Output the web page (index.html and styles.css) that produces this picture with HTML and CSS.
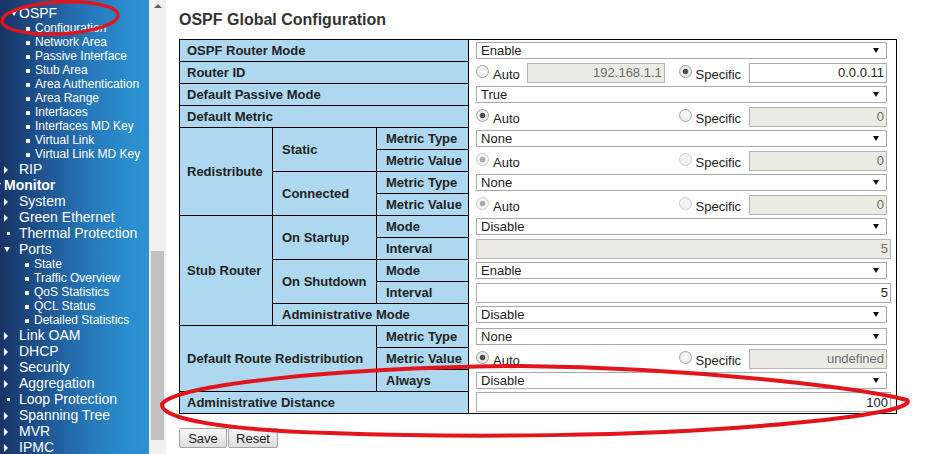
FILE: index.html
```html
<!DOCTYPE html>
<html>
<head>
<meta charset="utf-8">
<title>OSPF Global Configuration</title>
<link rel="stylesheet" href="styles.css">
</head>
<body>
<div class="page">
  <nav class="sidebar">
    <ul class="menu">
      <li class="top"><span class="mk mk-ospf"><span class="tri-d"></span></span>OSPF</li>
      <li class="sub"><span class="sq"></span>Configuration</li>
      <li class="sub"><span class="sq"></span>Network Area</li>
      <li class="sub"><span class="sq"></span>Passive Interface</li>
      <li class="sub"><span class="sq"></span>Stub Area</li>
      <li class="sub"><span class="sq"></span>Area Authentication</li>
      <li class="sub"><span class="sq"></span>Area Range</li>
      <li class="sub"><span class="sq"></span>Interfaces</li>
      <li class="sub"><span class="sq"></span>Interfaces MD Key</li>
      <li class="sub"><span class="sq"></span>Virtual Link</li>
      <li class="sub"><span class="sq"></span>Virtual Link MD Key</li>
      <li class="top"><span class="mk"><span class="tri-r"></span></span>RIP</li>
      <li class="group"><span class="mk-g"><span class="tri-d"></span></span>Monitor</li>
      <li class="top"><span class="mk"><span class="tri-r"></span></span>System</li>
      <li class="top"><span class="mk"><span class="tri-r"></span></span>Green Ethernet</li>
      <li class="top"><span class="mk"><span class="dot"></span></span>Thermal Protection</li>
      <li class="top"><span class="mk"><span class="tri-d"></span></span>Ports</li>
      <li class="sub sub2"><span class="sq"></span>State</li>
      <li class="sub sub2"><span class="sq"></span>Traffic Overview</li>
      <li class="sub sub2"><span class="sq"></span>QoS Statistics</li>
      <li class="sub sub2"><span class="sq"></span>QCL Status</li>
      <li class="sub sub2"><span class="sq"></span>Detailed Statistics</li>
      <li class="top"><span class="mk"><span class="tri-r"></span></span>Link OAM</li>
      <li class="top"><span class="mk"><span class="tri-r"></span></span>DHCP</li>
      <li class="top"><span class="mk"><span class="tri-r"></span></span>Security</li>
      <li class="top"><span class="mk"><span class="tri-r"></span></span>Aggregation</li>
      <li class="top"><span class="mk"><span class="dot"></span></span>Loop Protection</li>
      <li class="top"><span class="mk"><span class="tri-r"></span></span>Spanning Tree</li>
      <li class="top"><span class="mk"><span class="tri-r"></span></span>MVR</li>
      <li class="top"><span class="mk"><span class="tri-r"></span></span>IPMC</li>
    </ul>
  </nav>
  <div class="vscroll">
    <span class="up"></span>
    <span class="thumb"></span>
  </div>
  <main class="main">
    <h1 class="title">OSPF Global Configuration</h1>
    <table class="cfg">
      <colgroup>
        <col class="c1"><col class="c2"><col class="c3"><col class="c4">
      </colgroup>
      <tr>
        <th colspan="3" class="first">OSPF Router Mode</th>
        <td><span class="sel"><select><option>Enable</option></select></span></td>
      </tr>
      <tr>
        <th colspan="3" class="first">Router ID</th>
        <td>
          <div class="dual">
            <span class="opt"><input type="radio" class="rad" name="rid"><span class="lbl">Auto</span><input type="text" class="txt" value="192.168.1.1" disabled></span>
            <span class="opt"><input type="radio" class="rad" name="rid" checked><span class="lbl">Specific</span><input type="text" class="txt" value="0.0.0.11"></span>
          </div>
        </td>
      </tr>
      <tr>
        <th colspan="3" class="first">Default Passive Mode</th>
        <td><span class="sel"><select><option>True</option></select></span></td>
      </tr>
      <tr>
        <th colspan="3" class="first">Default Metric</th>
        <td>
          <div class="dual">
            <span class="opt"><input type="radio" class="rad" name="dm" checked><span class="lbl">Auto</span></span>
            <span class="opt"><input type="radio" class="rad" name="dm"><span class="lbl">Specific</span><input type="text" class="txt" value="0" disabled></span>
          </div>
        </td>
      </tr>
      <tr>
        <th rowspan="4" class="first">Redistribute</th>
        <th rowspan="2">Static</th>
        <th>Metric Type</th>
        <td><span class="sel"><select><option>None</option></select></span></td>
      </tr>
      <tr>
        <th>Metric Value</th>
        <td>
          <div class="dual">
            <span class="opt"><input type="radio" class="rad" name="rs" checked disabled><span class="lbl">Auto</span></span>
            <span class="opt"><input type="radio" class="rad" name="rs" disabled><span class="lbl">Specific</span><input type="text" class="txt" value="0" disabled></span>
          </div>
        </td>
      </tr>
      <tr>
        <th rowspan="2">Connected</th>
        <th>Metric Type</th>
        <td><span class="sel"><select><option>None</option></select></span></td>
      </tr>
      <tr>
        <th>Metric Value</th>
        <td>
          <div class="dual">
            <span class="opt"><input type="radio" class="rad" name="rc" checked disabled><span class="lbl">Auto</span></span>
            <span class="opt"><input type="radio" class="rad" name="rc" disabled><span class="lbl">Specific</span><input type="text" class="txt" value="0" disabled></span>
          </div>
        </td>
      </tr>
      <tr>
        <th rowspan="5" class="first">Stub Router</th>
        <th rowspan="2">On Startup</th>
        <th>Mode</th>
        <td><span class="sel"><select><option>Disable</option></select></span></td>
      </tr>
      <tr>
        <th>Interval</th>
        <td><input type="text" class="txt full" value="5" disabled></td>
      </tr>
      <tr>
        <th rowspan="2">On Shutdown</th>
        <th>Mode</th>
        <td><span class="sel"><select><option>Enable</option></select></span></td>
      </tr>
      <tr>
        <th>Interval</th>
        <td><input type="text" class="txt full" value="5"></td>
      </tr>
      <tr>
        <th colspan="2">Administrative Mode</th>
        <td><span class="sel"><select><option>Disable</option></select></span></td>
      </tr>
      <tr>
        <th rowspan="3" colspan="2" class="first">Default Route Redistribution</th>
        <th>Metric Type</th>
        <td><span class="sel"><select><option>None</option></select></span></td>
      </tr>
      <tr>
        <th>Metric Value</th>
        <td>
          <div class="dual">
            <span class="opt"><input type="radio" class="rad" name="dr" checked><span class="lbl">Auto</span></span>
            <span class="opt"><input type="radio" class="rad" name="dr"><span class="lbl">Specific</span><input type="text" class="txt" value="undefined" disabled></span>
          </div>
        </td>
      </tr>
      <tr>
        <th>Always</th>
        <td><span class="sel"><select><option>Disable</option></select></span></td>
      </tr>
      <tr>
        <th colspan="3" class="first">Administrative Distance</th>
        <td><input type="text" class="txt full" value="100"></td>
      </tr>
    </table>
    <div class="btns">
      <button class="btn btn-save" type="button">Save</button>
      <button class="btn btn-reset" type="button">Reset</button>
    </div>
  </main>
</div>
<svg class="marks" width="928" height="454" viewBox="0 0 928 454" aria-hidden="true">
  <ellipse cx="60" cy="18" rx="58" ry="16" fill="none" stroke="#e2151d" stroke-width="3.4" transform="rotate(-3 60 18)"/>
  <path d="M162,404 C175,385 330,368 520,366 C700,368 860,388 907,400 C915,408 860,418 760,426 C640,436 470,438 330,433 C230,430 160,420 162,404 Z" fill="none" stroke="#e2151d" stroke-width="4"/>
</svg>
</body>
</html>
```
FILE: styles.css
```css
* {
  box-sizing: border-box;
}

html,
body {
  margin: 0;
  padding: 0;
}

body {
  font-family: "Liberation Sans", Arial, sans-serif;
  background: #ffffff;
  width: 928px;
  height: 454px;
  overflow: hidden;
  position: relative;
}

.page {
  display: flex;
  height: 454px;
}

/* ---------- sidebar ---------- */
.sidebar {
  width: 149px;
  flex: none;
  overflow: hidden;
  color: #ffffff;
  background: linear-gradient(to right, #173465 0%, #1f5593 30%, #2678ba 60%, #2a8dcd 85%, #2b92d3 100%);
}

.menu {
  list-style: none;
  margin: 0;
  padding: 5px 0 0 0;
}

.menu li {
  white-space: nowrap;
  display: flex;
  align-items: center;
}

.top {
  font-size: 14px;
  line-height: 16px;
  height: 16px;
  padding-left: 4px;
}

.group {
  font-size: 14px;
  line-height: 16px;
  height: 16px;
  font-weight: bold;
  padding-left: 4px;
}

.sub {
  font-size: 12px;
  line-height: 14px;
  height: 14px;
  padding-left: 26px;
}

.sub2 {
  padding-left: 25px;
}

.mk {
  width: 15px;
  flex: none;
  display: flex;
  align-items: center;
  padding-top: 1px;
}

.mk-ospf {
  padding-left: 7px;
}

.mk-g {
  width: 7px;
  margin-left: -9px;
  margin-right: 2px;
  flex: none;
  display: flex;
  align-items: center;
  padding-top: 1px;
}

.tri-r {
  width: 0;
  height: 0;
  border-left: 4px solid #ffffff;
  border-top: 4px solid transparent;
  border-bottom: 4px solid transparent;
}

.tri-d {
  width: 0;
  height: 0;
  border-top: 5px solid #ffffff;
  border-left: 3px solid transparent;
  border-right: 3px solid transparent;
}

.dot {
  width: 3px;
  height: 3px;
  margin-left: 3px;
  background: #ffffff;
}

.sq {
  width: 4px;
  height: 4px;
  margin: 2px 5px 0 0;
  background: #ffffff;
  flex: none;
}

/* ---------- scrollbar ---------- */
.vscroll {
  width: 17px;
  flex: none;
  background: #f0f0f0;
  display: flex;
  flex-direction: column;
  align-items: center;
}

.vscroll .up {
  margin-top: 4px;
  width: 0;
  height: 0;
  border-bottom: 4px solid #606060;
  border-left: 4px solid transparent;
  border-right: 4px solid transparent;
}

.vscroll .thumb {
  width: 13px;
  height: 189px;
  margin-top: 243px;
  background: #c1c1c1;
}

/* ---------- main ---------- */
.main {
  flex: 1;
  padding: 10px 0 0 13px;
  color: #222222;
}

.title {
  font-size: 16px;
  font-weight: bold;
  line-height: 19px;
  margin: 0 0 10px 0;
  color: #333333;
}

.cfg {
  border-collapse: collapse;
  table-layout: fixed;
  width: 717px;
  border: 1px solid #000000;
}

.c1 { width: 93px; }
.c2 { width: 104px; }
.c3 { width: 92px; }
.c4 { width: 428px; }

.cfg th {
  background: #add8ef;
  border: 1px solid #000000;
  font-size: 13px;
  font-weight: bold;
  text-align: left;
  padding: 0 0 0 9px;
  height: 22px;
  color: #222222;
  white-space: nowrap;
  vertical-align: middle;
}

.cfg th.first {
  padding-left: 7px;
}

.cfg td {
  border-left: 1px solid #000000;
  border-right: 1px solid #000000;
  border-top: none;
  border-bottom: none;
  height: 22px;
  padding: 0 0 0 7px;
  vertical-align: middle;
  font-size: 13px;
}

.sel {
  position: relative;
  display: block;
  width: 411px;
  height: 17px;
}

.sel select {
  -webkit-appearance: none;
  appearance: none;
  display: block;
  width: 411px;
  height: 17px;
  margin: 0;
  border: 1px solid #a9a9a9;
  border-radius: 0;
  background: #ffffff;
  font-family: "Liberation Sans", Arial, sans-serif;
  font-size: 13px;
  line-height: 15px;
  color: #222222;
  padding: 0 0 0 4px;
}

.sel::after {
  content: "";
  position: absolute;
  right: 8px;
  top: 6px;
  width: 0;
  height: 0;
  border-top: 5px solid #111111;
  border-left: 3px solid transparent;
  border-right: 3px solid transparent;
}

.dual {
  display: flex;
  justify-content: space-between;
  align-items: center;
  width: 411px;
}

.opt {
  display: flex;
  align-items: center;
}

.rad {
  -webkit-appearance: none;
  appearance: none;
  flex: none;
  width: 13px;
  height: 13px;
  margin: 0 4px 0 0;
  border: 1px solid #a3a3a3;
  border-radius: 50%;
  background: radial-gradient(circle at 50% 40%, #fbfbfb 0, #e4e4e4 100%);
  position: relative;
  top: -1px;
}

.rad:checked {
  background: radial-gradient(circle, #505050 0, #505050 2.4px, #ececec 3.2px, #e4e4e4 100%);
}

.rad:disabled {
  border-color: #cccccc;
  background: #f3f3f3;
}

.rad:checked:disabled {
  background: radial-gradient(circle, #a9a9a9 0, #a9a9a9 2.4px, #f3f3f3 3.2px);
}

.lbl {
  font-size: 13px;
  color: #222222;
  padding-top: 3px;
}

.txt {
  width: 138px;
  height: 20px;
  margin: 0 0 0 7px;
  border: 1px solid #a9a9a9;
  border-radius: 0;
  padding: 0 2px;
  font-family: "Liberation Sans", Arial, sans-serif;
  font-size: 13px;
  text-align: right;
  color: #222222;
  background: #ffffff;
}

.opt:last-child .txt {
  margin-left: 8px;
}

.txt:disabled {
  background: #ebebe4;
  color: #6d6d6d;
  border-color: #b5b5b5;
}

.txt.full {
  width: 415px;
  margin: 0;
  display: block;
}

.btns {
  display: flex;
  gap: 1px;
  margin-top: 14px;
}

.btn {
  height: 20px;
  padding: 0;
  font-family: "Liberation Sans", Arial, sans-serif;
  font-size: 13px;
  color: #222222;
  border: 1px solid #a5a5a5;
  border-radius: 2px;
  background: linear-gradient(#f7f7f7, #dddddd);
}

.btn-save { width: 48px; }
.btn-reset { width: 50px; }

/* annotation overlay */
.marks {
  position: absolute;
  left: 0;
  top: 0;
  pointer-events: none;
}
```
